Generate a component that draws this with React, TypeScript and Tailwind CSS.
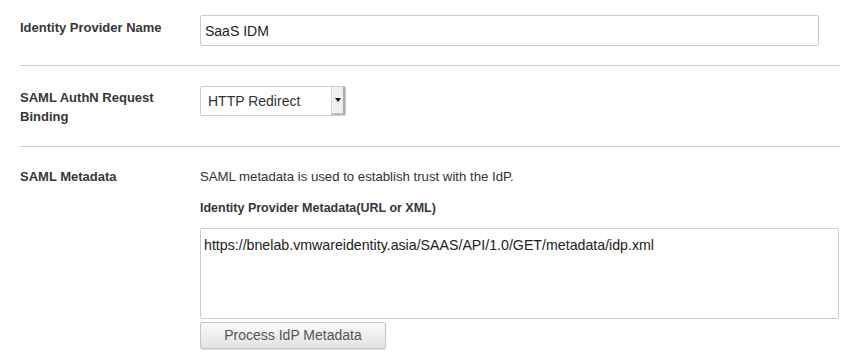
import React from "react";

export default function App() {
  return (
    <div className="w-[867px] h-[363px] bg-white font-['Liberation_Sans',Arial,sans-serif] text-[#333] px-[20px] overflow-hidden">
      <div className="w-[820px]">
        {/* Row 1 */}
        <div className="flex border-b border-[#cfcfcf] pt-[15px] pb-[19px]">
          <div className="w-[180px] pt-[3px] text-[13px] font-bold leading-[19px] text-[#34383c]">
            Identity Provider Name
          </div>
          <div className="w-[619px] h-[31px] border border-[#cccccc] rounded-[2px] pl-[4px] pt-[2px] flex items-center text-[14px] text-[#222]">
            SaaS IDM
          </div>
        </div>

        {/* Row 2 */}
        <div className="flex border-b border-[#cfcfcf] pt-[20px] pb-[20px]">
          <div className="w-[180px] mt-[2px] text-[13px] font-bold leading-[19px] text-[#34383c]">
            SAML AuthN Request
            <br />
            Binding
          </div>
          <div className="w-[146px] h-[30px] border border-[#cccccc] rounded-[2px] flex bg-white">
            <div className="flex-1 flex items-center pl-[7px] pt-[1px] text-[14px] text-[#333]">
              HTTP Redirect
            </div>
            <div className="w-[14px] h-full bg-[#efefef] border-l border-[#d6d6d6] border-r-2 border-r-[#a9a9a9] border-b-2 border-b-[#bdbdbd] flex items-center justify-center">
              <svg width="6" height="4" viewBox="0 0 6 4">
                <polygon points="0,0 6,0 3,4" fill="#111" />
              </svg>
            </div>
          </div>
        </div>

        {/* Row 3 */}
        <div className="flex pt-[20px]">
          <div className="w-[180px] text-[13px] font-bold leading-[19px] text-[#34383c]">
            SAML Metadata
          </div>
          <div className="flex flex-col">
            <div className="text-[13.2px] leading-[19px] text-[#333]">
              SAML metadata is used to establish trust with the IdP.
            </div>
            <div className="mt-[13px] text-[12.5px] font-bold leading-[19px] text-[#34383c]">
              Identity Provider Metadata(URL or XML)
            </div>
            <div className="mt-[10px] w-[639px] h-[91px] border border-[#cccccc] rounded-[2px] pl-[3px] pt-[7px] text-[14.2px] leading-[18px] text-[#222]">
              https://bnelab.vmwareidentity.asia/SAAS/API/1.0/GET/metadata/idp.xml
            </div>
            <div className="mt-[3px] w-[186px] h-[27px] border border-[#c6c6c6] rounded-[2px] bg-gradient-to-b from-[#fbfbfb] to-[#e2e2e2] shadow-[0_1px_1px_rgba(0,0,0,0.12)] flex items-center justify-center text-[14px] text-[#555]">
              Process IdP Metadata
            </div>
          </div>
        </div>
      </div>
    </div>
  );
}
